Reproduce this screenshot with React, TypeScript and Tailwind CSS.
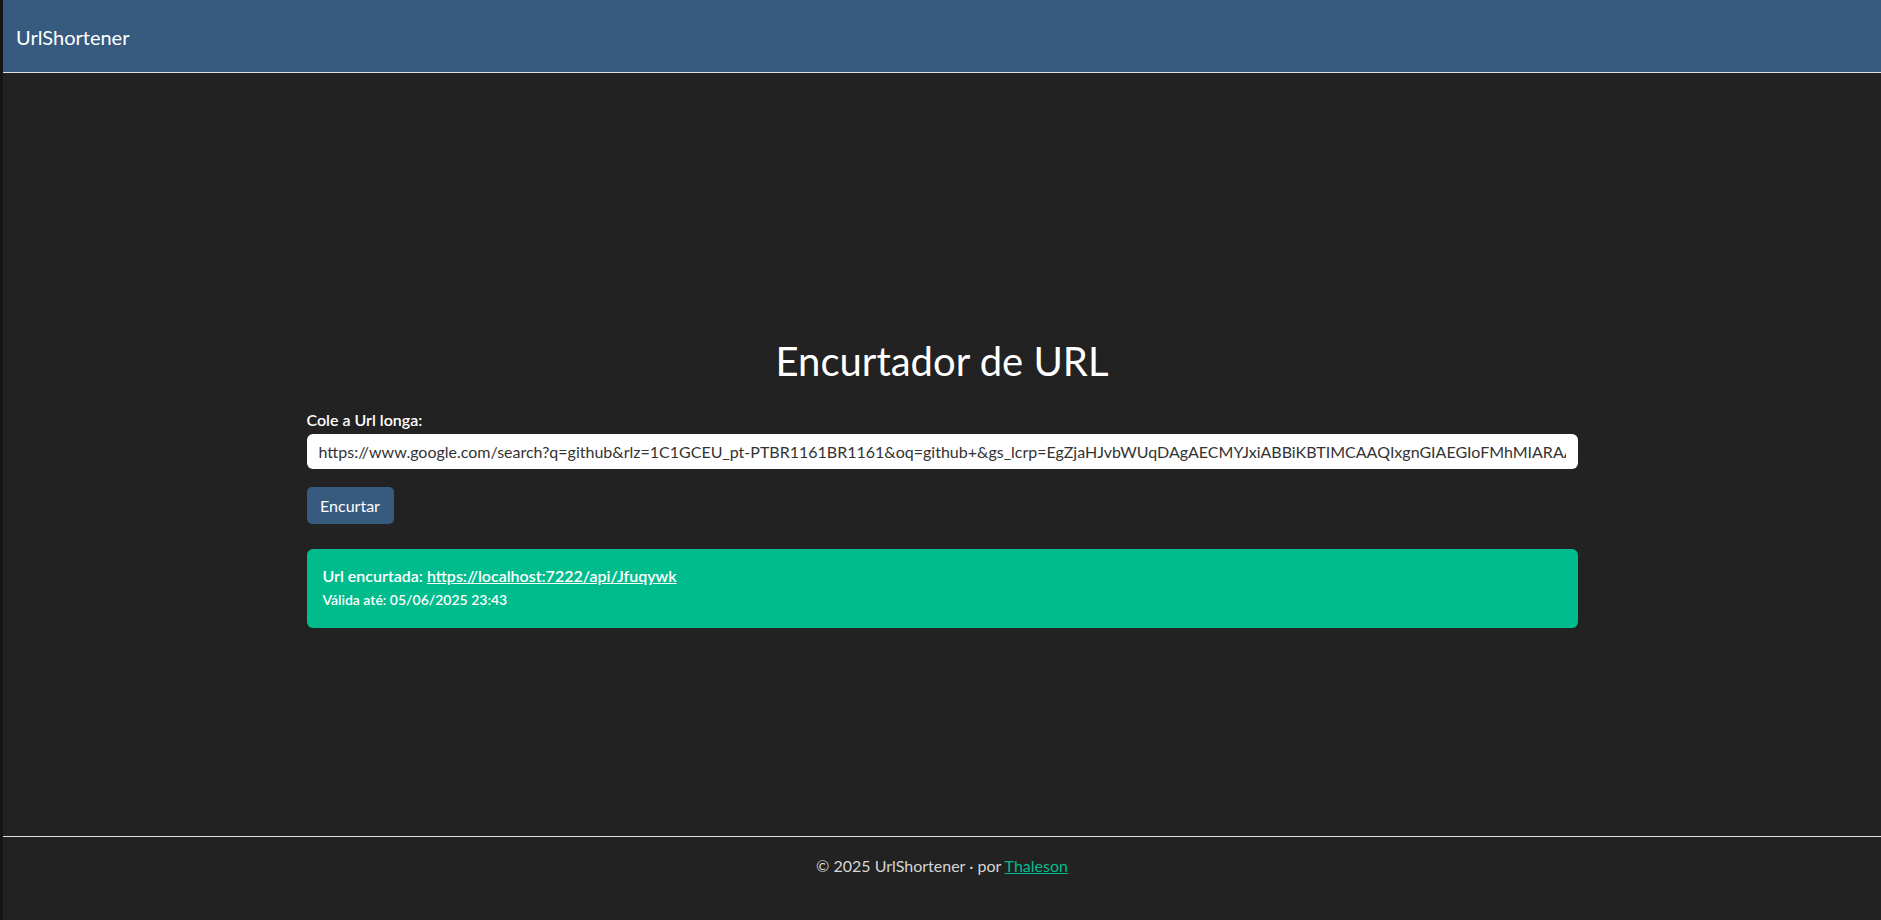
import React from 'react';

const longUrl =
  'https://www.google.com/search?q=github&rlz=1C1GCEU_pt-PTBR1161BR1161&oq=github+&gs_lcrp=EgZjaHJvbWUqDAgAECMYJxiABBiKBTIMCAAQIxgnGIAEGIoFMhMIARAAGEMYgwEYsQMYgAQYigUyBggCEEUYOTIGCAMQRRg8';

export default function App() {
  return (
    <div className="flex h-[920px] w-full bg-[#111] font-['Lato','Open_Sans',sans-serif]">
      {/* window edge */}
      <div className="w-[3px] shrink-0 bg-[#151515]" />

      <div className="flex flex-1 flex-col bg-[#222] text-white">
        {/* Navbar */}
        <header className="h-[73px] shrink-0 border-b border-[#dee2e6] bg-[#375a7f] px-[13px] pt-[2px] flex items-center">
          <span className="text-[20px] text-white">UrlShortener</span>
        </header>

        {/* Main */}
        <main className="flex-1">
          <div className="mx-auto w-[1271px] pt-[264px]">
            <h1 className="text-center text-[40px] leading-[48px] font-normal">Encurtador de URL</h1>

            <label className="mt-[25px] block text-[16px] leading-[20px] font-semibold">Cole a Url longa:</label>
            <input
              readOnly
              value={longUrl}
              className="mt-[4px] block h-[35px] w-full rounded-[6px] bg-white px-[12px] text-[16px] text-[#333] outline-none"
            />

            <button className="mt-[18px] h-[37px] w-[87px] rounded-[5px] bg-[#375a7f] text-[16px] text-white">
              Encurtar
            </button>

            <div className="mt-[25px] h-[79px] rounded-[6px] bg-[#00bc8c] px-[16px] pt-[16px]">
              <p className="text-[16px] leading-[22px] font-semibold">
                Url encurtada:{' '}
                <a href="#" className="underline">https://localhost:7222/api/Jfuqywk</a>
              </p>
              <p className="mt-[3px] text-[14px] leading-[20px] font-semibold">Válida até: 05/06/2025 23:43</p>
            </div>
          </div>
        </main>

        {/* Footer */}
        <footer className="h-[84px] shrink-0 border-t border-[#dee2e6] pt-[17px] text-center text-[16px] text-[#d6d6d6]">
          © 2025 UrlShortener · por{' '}
          <a href="#" className="text-[#00bc8c] underline">Thaleson</a>
        </footer>
      </div>
    </div>
  );
}
